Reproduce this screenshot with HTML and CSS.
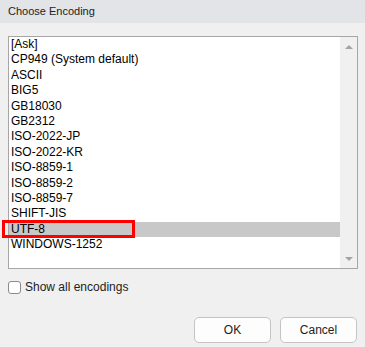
FILE: index.html
```html
<html>
  <head>
    <title>Choose Encoding</title>
    <meta charset="UTF-8" />
    <link rel="stylesheet" href="styles.css">
  </head>
  <body>
    <div class="titlebar">Choose Encoding</div>

    <div class="listbox">
      <ul class="items">
        <li>[Ask]</li>
        <li>CP949 (System default)</li>
        <li>ASCII</li>
        <li>BIG5</li>
        <li>GB18030</li>
        <li>GB2312</li>
        <li>ISO-2022-JP</li>
        <li>ISO-2022-KR</li>
        <li>ISO-8859-1</li>
        <li>ISO-8859-2</li>
        <li>ISO-8859-7</li>
        <li>SHIFT-JIS</li>
        <li class="selected">UTF-8<span class="marker"></span></li>
        <li>WINDOWS-1252</li>
      </ul>
      <div class="scrollbar">
        <span class="arrow up"></span>
        <span class="arrow down"></span>
      </div>
    </div>

    <label class="check">
      <span class="box"></span>
      Show all encodings
    </label>

    <div class="buttons">
      <button class="btn">OK</button>
      <button class="btn">Cancel</button>
    </div>
  </body>
</html>
```

FILE: styles.css
```css
body {
  margin: 0;
  width: 365px;
  height: 347px;
  background: #f0f0f0;
  font-family: "Liberation Sans", Arial, sans-serif;
  color: #000;
  overflow: hidden;
}

.titlebar {
  height: 23px;
  line-height: 22px;
  padding-left: 8px;
  background: #e3e4e7;
  font-size: 11px;
  color: #222;
}

.listbox {
  margin: 13px 7px 0 8px;
  height: 231px;
  border: 1px solid #a6a6a6;
  background: #fff;
  display: flex;
}

.items {
  list-style: none;
  margin: 0;
  padding: 0;
  flex: 1;
}

.items li {
  position: relative;
  height: 15.4px;
  line-height: 15.4px;
  padding-left: 2px;
  font-size: 12px;
}

.items li.selected {
  background: #c8c8c8;
}

/* red callout round the selected row */
.marker {
  position: absolute;
  left: -7px;
  top: -2px;
  width: 127px;
  height: 12px;
  border: 3.5px solid #f00;
}

.scrollbar {
  width: 17px;
  background: #f0f0f0;
  display: flex;
  flex-direction: column;
  justify-content: space-between;
  align-items: center;
  padding: 8px 0 7px;
}

.arrow {
  width: 0;
  height: 0;
  border-left: 4px solid transparent;
  border-right: 4px solid transparent;
}

.arrow.up {
  border-bottom: 4px solid #a3a3a3;
}

.arrow.down {
  border-top: 4px solid #a3a3a3;
}

.check {
  display: flex;
  align-items: center;
  gap: 4px;
  margin: 11px 0 0 8px;
  font-size: 12px;
  color: #222;
}

.check .box {
  width: 11px;
  height: 11px;
  border: 1px solid #8a8a8a;
  border-radius: 3px;
  background: #fff;
}

.buttons {
  display: flex;
  justify-content: flex-end;
  gap: 9px;
  margin: 23px 8px 0 0;
}

.btn {
  width: 77px;
  height: 26px;
  border: 1px solid #c4c4c4;
  border-radius: 5px;
  background: #fdfdfd;
  font-family: "Liberation Sans", Arial, sans-serif;
  font-size: 12px;
  color: #222;
}
```
